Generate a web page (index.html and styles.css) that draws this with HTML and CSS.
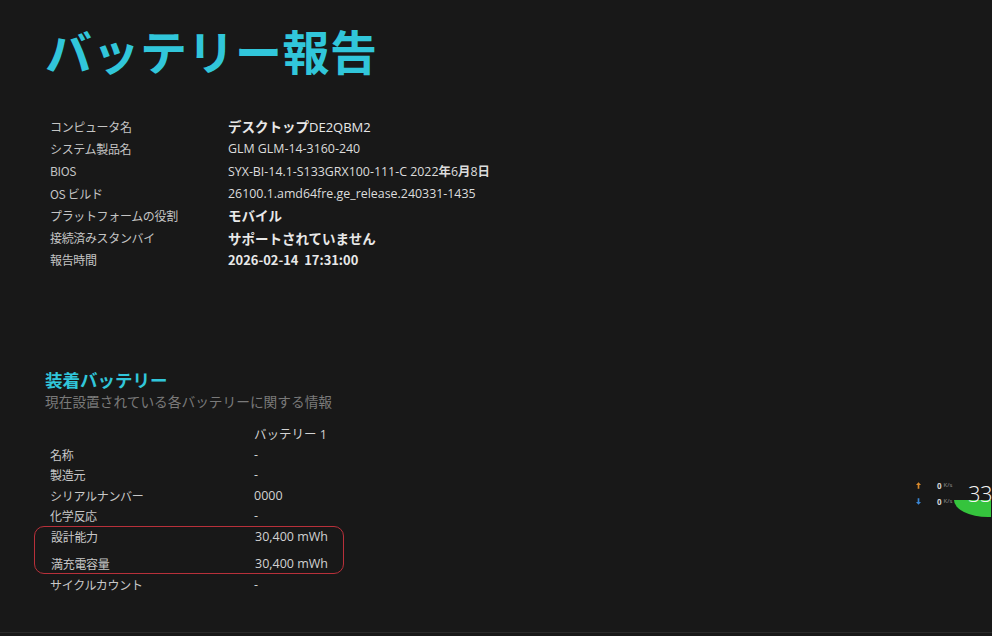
FILE: index.html
```html
<!DOCTYPE html>
<html lang="ja">
<head>
<meta charset="utf-8">
<title>バッテリー報告</title>
<link rel="stylesheet" href="styles.css">
</head>
<body>
<main class="report">
  <h1 class="title">バッテリー報告</h1>

  <dl class="info">
    <dt>コンピュータ名</dt><dd class="strong">デスクトップ<span class="latin">DE2QBM2</span></dd>
    <dt>システム製品名</dt><dd>GLM GLM-14-3160-240</dd>
    <dt>BIOS</dt><dd>SYX-BI-14.1-S133GRX100-111-C 2022<b>年</b>6<b>月</b>8<b>日</b></dd>
    <dt>OS ビルド</dt><dd>26100.1.amd64fre.ge_release.240331-1435</dd>
    <dt>プラットフォームの役割</dt><dd class="strong">モバイル</dd>
    <dt>接続済みスタンバイ</dt><dd class="strong">サポートされていません</dd>
    <dt>報告時間</dt><dd class="strong date">2026-02-14&nbsp;&nbsp;17:31:00</dd>
  </dl>

  <section class="batteries">
    <h2 class="section-title">装着バッテリー</h2>
    <p class="section-sub">現在設置されている各バッテリーに関する情報</p>

    <div class="btable">
      <div class="brow head"><span></span><span class="bval">バッテリー 1</span></div>
      <div class="brow"><span>名称</span><span class="bval">-</span></div>
      <div class="brow"><span>製造元</span><span class="bval">-</span></div>
      <div class="brow"><span>シリアルナンバー</span><span class="bval">0000</span></div>
      <div class="brow"><span>化学反応</span><span class="bval">-</span></div>
      <div class="highlight">
        <div class="brow"><span>設計能力</span><span class="bval">30,400 mWh</span></div>
        <div class="brow"><span>満充電容量</span><span class="bval">30,400 mWh</span></div>
      </div>
      <div class="brow"><span>サイクルカウント</span><span class="bval">-</span></div>
    </div>
  </section>
</main>

<aside class="netwidget">
  <div class="speeds">
    <div class="speed"><svg class="arrow" viewBox="0 0 6 8" width="5" height="7"><path d="M3 0 L6 3.5 H4 V8 H2 V3.5 H0 Z" fill="#d98a2c"/></svg><span>0</span><small>K/s</small></div>
    <div class="speed"><svg class="arrow" viewBox="0 0 6 8" width="5" height="7"><path d="M3 8 L6 4.5 H4 V0 H2 V4.5 H0 Z" fill="#3a86d4"/></svg><span>0</span><small>K/s</small></div>
  </div>
  <div class="gauge">
    <svg class="gauge-arc" viewBox="0 0 40 44" width="40" height="44"><path d="M3 22 A34 17 0 0 0 71 22 Z" fill="#35c43d"/></svg>
    <span class="gauge-num">33</span>
  </div>
</aside>
<div class="bottom-line"></div>
</body>
</html>
```

FILE: styles.css
```css
html, body {
  margin: 0;
  padding: 0;
  background: #181818;
  height: 100%;
  overflow: hidden;
}
body {
  font-family: "Noto Sans CJK JP", "Noto Sans", sans-serif;
  color: #d6d6d6;
  position: relative;
}
.report {
  padding: 20px 0 0 45px;
}
.title {
  margin: 0;
  font-size: 47px;
  line-height: 60px;
  font-weight: 700;
  color: #31c6da;
  letter-spacing: 0.5px;
}
.info {
  margin: 35px 0 0 5px;
  display: grid;
  grid-template-columns: 178px auto;
  grid-auto-rows: 22.3px;
  align-items: center;
  font-size: 12px;
}
.info dt {
  color: #c4c4c4;
  font-weight: 400;
  letter-spacing: -0.35px;
}
.info dd {
  margin: 0;
  color: #dcdcdc;
  font-family: "Open Sans", "Noto Sans CJK JP", sans-serif;
  font-size: 12.4px;
  font-weight: 400;
}
.info dd.strong {
  font-family: "Noto Sans CJK JP", sans-serif;
  font-size: 13.5px;
  font-weight: 700;
  color: #e8e8e8;
}
.info dd.date {
  font-size: 12.9px;
}
.info dd .latin {
  font-family: "Open Sans", sans-serif;
  font-size: 13px;
  font-weight: 400;
}
.info dd b {
  font-family: "Noto Sans CJK JP", sans-serif;
  font-weight: 700;
}
.batteries {
  margin-top: 99px;
}
.section-title {
  margin: 0;
  font-size: 17.5px;
  line-height: 20px;
  font-weight: 700;
  color: #31c6da;
}
.section-sub {
  margin: 0;
  font-size: 13.7px;
  line-height: 22px;
  color: #7a7a7a;
}
.btable {
  margin-top: 11px;
  font-size: 12px;
  width: 310px;
}
.brow {
  display: grid;
  grid-template-columns: 204px auto;
  height: 20.5px;
  align-items: center;
  padding-left: 5px;
  color: #c8c8c8;
  letter-spacing: -0.3px;
}
.brow.head {
  height: 21px;
}
.bval {
  color: #d2d2d2;
  font-family: "Open Sans", "Noto Sans CJK JP", sans-serif;
  font-size: 12.5px;
  letter-spacing: 0;
}
.highlight {
  margin: 0 0 0 -11px;
  padding: 0 0 0 11px;
  width: 297px;
  border: 1.5px solid #b8303a;
  border-radius: 10px;
  display: flex;
  flex-direction: column;
  gap: 8px;
}
.highlight .brow {
  height: 19px;
}
.netwidget {
  position: absolute;
  left: 914px;
  top: 478px;
  display: flex;
  align-items: flex-start;
}
.speeds {
  display: flex;
  flex-direction: column;
  gap: 4px;
  width: 41px;
  padding-top: 1px;
}
.speed {
  display: flex;
  align-items: center;
  height: 12px;
  font-family: "Open Sans", sans-serif;
  color: #d4d4d4;
  font-size: 8px;
  font-weight: 700;
}
.speed .arrow {
  margin-left: 2px;
  margin-right: 16px;
}
.speed small {
  font-size: 6px;
  font-weight: 400;
  margin-left: 2px;
  color: #9a9a9a;
}
.gauge {
  position: relative;
  width: 40px;
  height: 44px;
  margin-left: -4px;
}
.gauge-arc {
  display: block;
}
.gauge-num {
  position: absolute;
  left: 17px;
  top: 1px;
  font-family: "Open Sans", sans-serif;
  font-size: 22px;
  font-weight: 300;
  color: #f4f4f4;
  line-height: 28px;
  letter-spacing: -0.5px;
  white-space: nowrap;
}
.bottom-line {
  position: absolute;
  left: 0;
  right: 0;
  bottom: 3px;
  height: 1px;
  background: #2a2a2a;
}
```
